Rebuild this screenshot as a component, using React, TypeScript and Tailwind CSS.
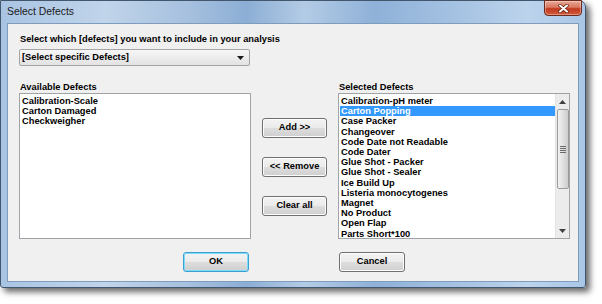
import React from 'react';

const available = ['Calibration-Scale', 'Carton Damaged', 'Checkweigher'];

const selected = [
  'Calibration-pH meter',
  'Carton Popping',
  'Case Packer',
  'Changeover',
  'Code Date not Readable',
  'Code Dater',
  'Glue Shot - Packer',
  'Glue Shot - Sealer',
  'Ice Build Up',
  'Listeria monocytogenes',
  'Magnet',
  'No Product',
  'Open Flap',
  'Parts Short*100',
];

const WinButton: React.FC<{ label: string; isDefault?: boolean; w?: string }> = ({ label, isDefault, w = 'w-[65px]' }) => (
  <div
    className={`${w} h-[20px] rounded-[3px] border ${
      isDefault ? 'border-[#3c9fd0] shadow-[inset_0_0_0_1px_#7fdcf8]' : 'border-[#707070] shadow-[inset_0_0_0_1px_#fcfcfc]'
    } bg-[linear-gradient(#f3f3f3_0%,#ebebeb_48%,#dddddd_52%,#cfcfcf_100%)] flex items-center justify-center font-bold text-[9.3px] leading-none text-black`}
  >
    {label}
  </div>
);

const Scrollbar: React.FC = () => (
  <div className="w-[14px] h-full bg-[#ececec] border-l border-[#e3e3e3] flex flex-col items-center">
    <div className="h-[15px] w-full flex items-center justify-center">
      <svg width="7" height="4" viewBox="0 0 7 4">
        <path d="M0 4 L3.5 0 L7 4 Z" fill="#404040" />
      </svg>
    </div>
    <div className="w-[12px] h-[80px] rounded-[2px] border border-[#9b9b9b] bg-[linear-gradient(to_right,#f2f2f2,#e0e0e0_50%,#cdcdcd)] flex flex-col items-center justify-center gap-[1px]">
      <div className="w-[6px] h-[1px] bg-[#6a6a6a]" />
      <div className="w-[6px] h-[1px] bg-[#6a6a6a]" />
      <div className="w-[6px] h-[1px] bg-[#6a6a6a]" />
      <div className="w-[6px] h-[1px] bg-[#6a6a6a]" />
    </div>
    <div className="flex-1" />
    <div className="h-[15px] w-full flex items-center justify-center">
      <svg width="7" height="4" viewBox="0 0 7 4">
        <path d="M0 0 L3.5 4 L7 0 Z" fill="#404040" />
      </svg>
    </div>
  </div>
);

export default function App() {
  return (
    <div className="w-[602px] h-[304px] bg-white overflow-hidden font-['Liberation_Sans',Arial,sans-serif]">
      <div className="w-[586px] h-[288px] rounded-tr-[7px] rounded-br-[3px] rounded-bl-[3px] border border-[#42566e] bg-[linear-gradient(to_right,#a9c4e3_0%,#c0d4ea_18%,#a6c0de_32%,#8caed5_42%,#b3cbe5_52%,#8fb1d8_64%,#a5c2e2_78%,#bcd3ec_90%,#a9c6e6_100%)] shadow-[4px_4px_6px_rgba(0,0,0,0.6)] flex flex-col">
        {/* title bar */}
        <div className="h-[22px] flex items-start">
          <div className="pl-[6px] pt-[5px] text-[10.4px] leading-[12px] text-[#1a1a1a]">Select Defects</div>
          <div className="ml-auto mr-[3px] mt-[-1px] w-[38px] h-[16px] rounded-b-[4px] border border-[#6b2a1c] bg-[linear-gradient(#e8a897_0%,#d9775f_45%,#c33a1f_55%,#d15a3a_100%)] shadow-[inset_0_0_0_1px_rgba(255,255,255,0.35)] flex items-center justify-center">
            <svg width="11" height="9" viewBox="0 0 11 9">
              <path d="M2 1.5 L9 7.5 M9 1.5 L2 7.5" stroke="#5a1d12" strokeWidth="3.4" strokeLinecap="round" />
              <path d="M2 1.5 L9 7.5 M9 1.5 L2 7.5" stroke="#ffffff" strokeWidth="2" strokeLinecap="round" />
            </svg>
          </div>
        </div>

        {/* client area */}
        <div className="mx-[6px] mb-[5px] flex-1 border border-[#7f9cbd] bg-[#f0f0f0] pl-[11px] pt-[10px] text-black text-[9.3px]">
          <div className="pl-[1px] font-bold leading-[11px]">Select which [defects] you want to include in your analysis</div>

          <div className="mt-[4px] w-[231px] h-[17px] border border-[#a5a5a5] rounded-[2px] bg-[linear-gradient(#f7f7f7,#ececec_50%,#e2e2e2)] flex items-center pl-[2px] pr-[5px]">
            <span className="font-bold leading-none">[Select specific Defects]</span>
            <svg className="ml-auto" width="7" height="4" viewBox="0 0 7 4">
              <path d="M0 0 L3.5 4 L7 0 Z" fill="#1a1a1a" />
            </svg>
          </div>

          <div className="mt-[15px] flex">
            {/* available */}
            <div className="w-[232px] flex flex-col">
              <div className="pl-[1px] font-bold leading-[12px]">Available Defects</div>
              <div className="h-[146px] border border-[#a0a3a8] bg-white pt-[2px] px-[1px] overflow-hidden">
                {available.map((d) => (
                  <div key={d} className="pl-[1px] font-bold leading-[10.2px] whitespace-nowrap">
                    {d}
                  </div>
                ))}
              </div>
            </div>

            {/* middle buttons */}
            <div className="w-[87px] flex flex-col items-center pt-[37px] gap-[19px]">
              <WinButton label="Add >>" />
              <WinButton label="<< Remove" />
              <WinButton label="Clear all" />
            </div>

            {/* selected */}
            <div className="w-[232px] flex flex-col">
              <div className="pl-[1px] font-bold leading-[12px]">Selected Defects</div>
              <div className="h-[146px] border border-[#a0a3a8] bg-white flex overflow-hidden">
                <div className="flex-1 pt-[2px] pl-[1px] overflow-hidden">
                  {selected.map((d, i) => (
                    <div
                      key={d}
                      className={`pl-[1px] font-bold leading-[10.2px] whitespace-nowrap ${
                        i === 1 ? 'bg-[#3399ff] text-white' : ''
                      }`}
                    >
                      {d}
                    </div>
                  ))}
                </div>
                <Scrollbar />
              </div>
            </div>
          </div>

          <div className="mt-[13px] flex">
            <div className="ml-[164px]">
              <WinButton label="OK" isDefault w="w-[66px]" />
            </div>
            <div className="ml-[90px]">
              <WinButton label="Cancel" w="w-[66px]" />
            </div>
          </div>
        </div>
      </div>
    </div>
  );
}
